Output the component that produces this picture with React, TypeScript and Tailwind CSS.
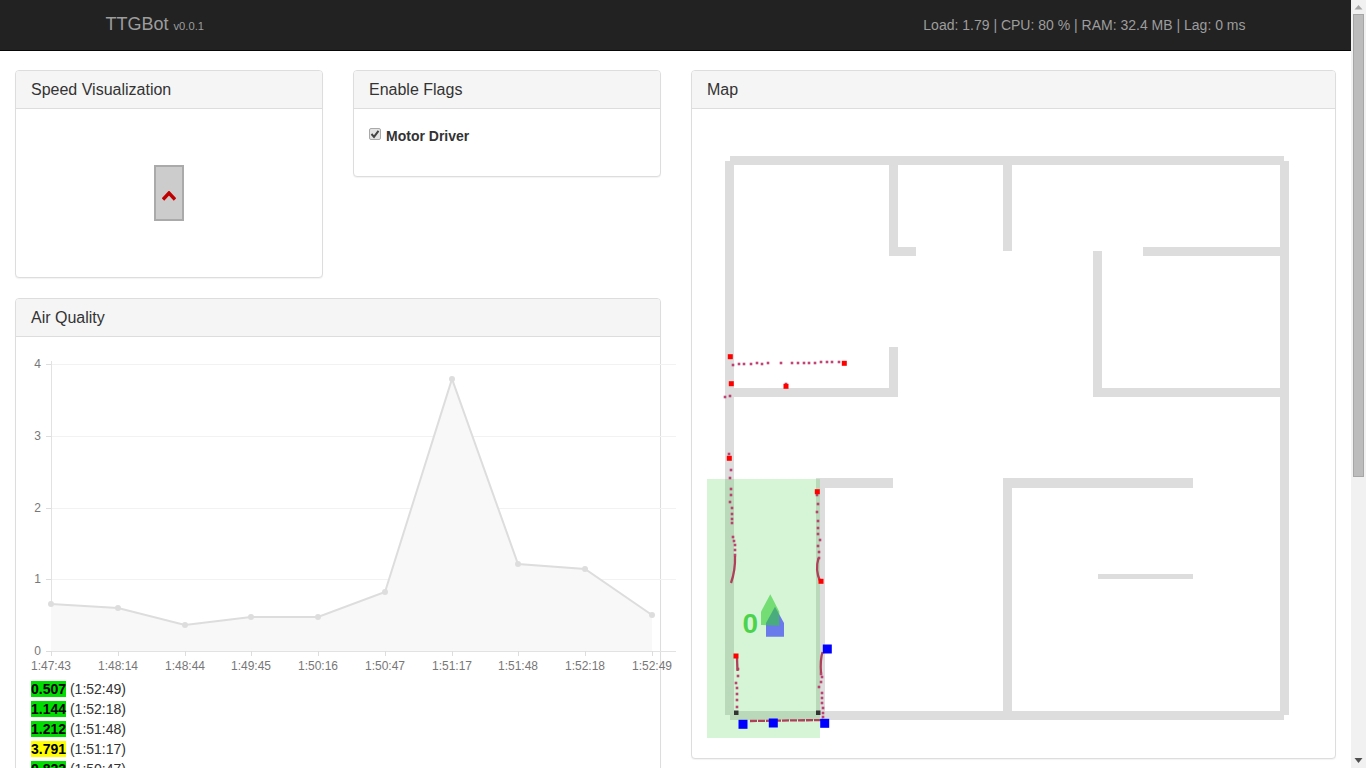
const walls = [
  [730, 156, 554, 9],
  [725, 161, 9, 554],
  [1280, 161, 9, 554],
  [730, 711, 554, 9],
  [889, 165, 9, 91],
  [889, 247, 27, 9],
  [1003, 165, 9, 86],
  [1143, 247, 137, 9],
  [1093, 251, 9, 146],
  [1093, 388, 196, 9],
  [734, 388, 164, 9],
  [889, 347, 9, 50],
  [816, 478, 9, 238],
  [825, 478, 68, 10],
  [1003, 478, 9, 238],
  [1012, 478, 181, 10],
  [1098, 574, 95, 5],
];

const dots = [
  [733, 365], [739, 364], [744, 364], [751, 364], [757, 363], [762, 364], [768, 363], [781, 363],
  [792, 363], [798, 363], [804, 363], [809, 363], [815, 363], [821, 362], [827, 362], [832, 362], [839, 362],
  [725, 397], [730, 396], [786, 384], [729, 454],
  [731, 470], [730, 478], [731, 489], [731, 495], [730, 502], [732, 508], [732, 514], [732, 519], [732, 523], [733, 537],
  [734, 541], [735, 545], [735, 550], [735, 555],
  [817, 495], [818, 504], [817, 512], [818, 521], [818, 528], [818, 534], [820, 540], [818, 546], [819, 552], [819, 558],
  [738, 676], [736, 683], [737, 688], [737, 700], [737, 707], [737, 694], [738, 669],
  [821, 674], [822, 677], [819, 687], [822, 693], [822, 698], [822, 703], [823, 708], [823, 713], [823, 717], [821, 682],
];

const redSquares = [
  [730.3, 356.7], [731.3, 383.7], [844.3, 363.3], [786, 386.3], [729.3, 458.3], [817.3, 491.7], [821, 581.3], [736, 656],
];

const blueSquares = [
  [827.3, 649], [743, 724.3], [773.3, 723], [824.7, 723.3],
];

const chartPoints = [
  { x: 51, y: 604, label: "1:47:43" },
  { x: 118, y: 608, label: "1:48:14" },
  { x: 185, y: 625, label: "1:48:44" },
  { x: 251, y: 617, label: "1:49:45" },
  { x: 318, y: 617, label: "1:50:16" },
  { x: 385, y: 592, label: "1:50:47" },
  { x: 452, y: 379, label: "1:51:17" },
  { x: 518, y: 564, label: "1:51:48" },
  { x: 585, y: 569, label: "1:52:18" },
  { x: 652, y: 615, label: "1:52:49" },
];

const yTicks = [
  { y: 364, label: "4" },
  { y: 436, label: "3" },
  { y: 508, label: "2" },
  { y: 579, label: "1" },
  { y: 651, label: "0" },
];

const readings = [
  { value: "0.507", time: "1:52:49", bg: "bg-[#00dd00]" },
  { value: "1.144", time: "1:52:18", bg: "bg-[#00dd00]" },
  { value: "1.212", time: "1:51:48", bg: "bg-[#00dd00]" },
  { value: "3.791", time: "1:51:17", bg: "bg-[#ffff00]" },
  { value: "0.822", time: "1:50:47", bg: "bg-[#00dd00]" },
];

const Panel = ({ title, className, children }: { title: string; className: string; children: React.ReactNode }) => (
  <div className={`rounded-[4px] border border-[#ddd] bg-white shadow-[0_1px_1px_rgba(0,0,0,0.05)] ${className}`}>
    <div className="h-[38px] rounded-t-[3px] border-b border-[#ddd] bg-[#f5f5f5] px-[15px] pt-[10px] text-[16px] leading-[18px] text-[#333]">
      {title}
    </div>
    {children}
  </div>
);

const AirChart = () => {
  const line = chartPoints.map((p) => `${p.x},${p.y}`).join(" ");
  return (
    <svg width="614" height="342" viewBox="31 337 614 342" className="overflow-visible">
      {yTicks.map((t) => (
        <g key={t.label}>
          <line x1="46" x2="676" y1={t.y + 0.5} y2={t.y + 0.5} stroke={t.label === "0" ? "#e2e2e2" : "#f2f2f2"} />
          <line x1="46" x2="51" y1={t.y + 0.5} y2={t.y + 0.5} stroke="#ddd" />
          <text x="41" y={t.y + 4} textAnchor="end" fontSize="12" fill="#777">
            {t.label}
          </text>
        </g>
      ))}
      <line x1="51.5" x2="51.5" y1="361" y2="651" stroke="#e2e2e2" />
      <polygon points={`51,651 ${line} 652,651`} fill="#f8f8f8" />
      <polyline points={line} fill="none" stroke="#ddd" strokeWidth="2" />
      {chartPoints.map((p) => (
        <g key={p.label}>
          <circle cx={p.x} cy={p.y} r="3" fill="#ddd" />
          <line x1={p.x + 0.5} x2={p.x + 0.5} y1="651" y2="656" stroke="#ddd" />
          <text x={p.x} y="670" textAnchor="middle" fontSize="12" fill="#777">
            {p.label}
          </text>
        </g>
      ))}
    </svg>
  );
};

const MapView = () => (
  <svg width="643" height="649" viewBox="692 109 643 649">
    {walls.map(([x, y, w, h], i) => (
      <rect key={i} x={x} y={y} width={w} height={h} fill="#ddd" />
    ))}
    <rect x="707" y="479" width="113" height="259" fill="rgb(50,205,50)" fillOpacity="0.2" />
    {dots.map(([x, y], i) => (
      <rect key={i} x={x - 1.3} y={y - 1.3} width="2.6" height="2.6" fill="#bc3064" fillOpacity="0.9" />
    ))}
    <g fill="none" stroke="#b0405a" strokeWidth="2.3">
      <path d="M735 556 Q735.5 570 731 583" />
      <path d="M818.5 558 Q815 570 820 581" />
      <path d="M737 658 L737.5 671" />
      <path d="M822.5 652 Q820 660 821 673" />
      <path d="M750 721 L823 720" strokeDasharray="7 1" />
    </g>
    {redSquares.map(([x, y], i) => (
      <rect key={i} x={x - 2.5} y={y - 2.5} width="5" height="5" fill="#f00" />
    ))}
    {blueSquares.map(([x, y], i) => (
      <rect key={i} x={x - 4.5} y={y - 4.5} width="9" height="9" fill="#00f" />
    ))}
    <rect x="734" y="710.5" width="4.5" height="4.5" fill="#333" />
    <rect x="816" y="710.5" width="4.5" height="4.5" fill="#333" />
    <polygon points="775,606.7 784,623 784,636.7 766,636.7 766,623" fill="#00f" fillOpacity="0.5" />
    <polygon points="770.3,594.3 779.3,611.7 779.3,625.7 761,625 761,611.7" fill="rgb(50,205,50)" fillOpacity="0.6" />
    <text x="742.5" y="633" fontSize="28" fontWeight="700" fill="rgb(50,205,50)" fillOpacity="0.85">
      0
    </text>
  </svg>
);

const Scrollbar = () => (
  <div className="flex h-screen w-[15px] shrink-0 flex-col items-center bg-[#f1f1f1]">
    <svg width="15" height="14" viewBox="0 0 15 14">
      <polygon points="7.5,5 11.5,9.5 3.5,9.5" fill="#a6a6a6" />
    </svg>
    <div className="h-[463px] w-[11px] border border-[#a6a6a6] bg-[#bcbcbc]" />
    <div className="flex-1" />
    <svg width="15" height="14" viewBox="0 0 15 14">
      <polygon points="3.5,4 11.5,4 7.5,9" fill="#505050" />
    </svg>
  </div>
);

export default function App() {
  return (
    <div className="flex h-screen overflow-hidden bg-white font-['Liberation_Sans',Arial,sans-serif] text-[14px] leading-[20px] text-[#333]">
      <div className="min-w-0 flex-1">
        <nav className="flex h-[51px] items-center justify-between border-b border-[#080808] bg-[#222] pl-[105.5px] pr-[105.5px] text-[#9d9d9d]">
          <div className="text-[18px] leading-[20px]">
            TTGBot <small className="text-[11.2px] text-[#9d9d9d]">v0.0.1</small>
          </div>
          <div>Load: 1.79 | CPU: 80 % | RAM: 32.4 MB | Lag: 0 ms</div>
        </nav>

        <main className="flex items-start gap-[30px] px-[15px] pt-[19px]">
          <div className="flex w-[646px] shrink-0 flex-col gap-[20px]">
            <div className="flex items-start gap-[30px]">
              <Panel title="Speed Visualization" className="w-[308px]">
                <div className="flex h-[168px] items-center justify-center">
                  <div className="flex h-[56px] w-[30px] items-center justify-center border-2 border-[#aaa] bg-[#ccc]">
                    <svg width="14" height="10" viewBox="0 0 14 10" className="mt-[6px]">
                      <path d="M1 8.5 L7 2 L13 8.5" fill="none" stroke="#c00000" strokeWidth="3.4" />
                    </svg>
                  </div>
                </div>
              </Panel>
              <Panel title="Enable Flags" className="w-[308px]">
                <div className="flex h-[67px] items-start gap-[5px] px-[15px] pt-[17px] font-bold">
                  <span className="mt-[2px] flex h-[12px] w-[12px] items-center justify-center rounded-[2px] border border-[#a9a9a9] bg-[#e4e4e4]">
                    <svg width="10" height="10" viewBox="0 0 10 10">
                      <path d="M1.5 5 L4 7.8 L8.5 1.8" fill="none" stroke="#444" strokeWidth="2" />
                    </svg>
                  </span>
                  <span>Motor Driver</span>
                </div>
              </Panel>
            </div>

            <Panel title="Air Quality" className="w-full">
              <div className="px-[15px]">
                <AirChart />
                {readings.map((r) => (
                  <div key={r.time}>
                    <span className={`font-bold text-black ${r.bg}`}>{r.value}</span> ({r.time})
                  </div>
                ))}
              </div>
            </Panel>
          </div>

          <Panel title="Map" className="w-[645px] shrink-0">
            <MapView />
          </Panel>
        </main>
      </div>
      <Scrollbar />
    </div>
  );
}
